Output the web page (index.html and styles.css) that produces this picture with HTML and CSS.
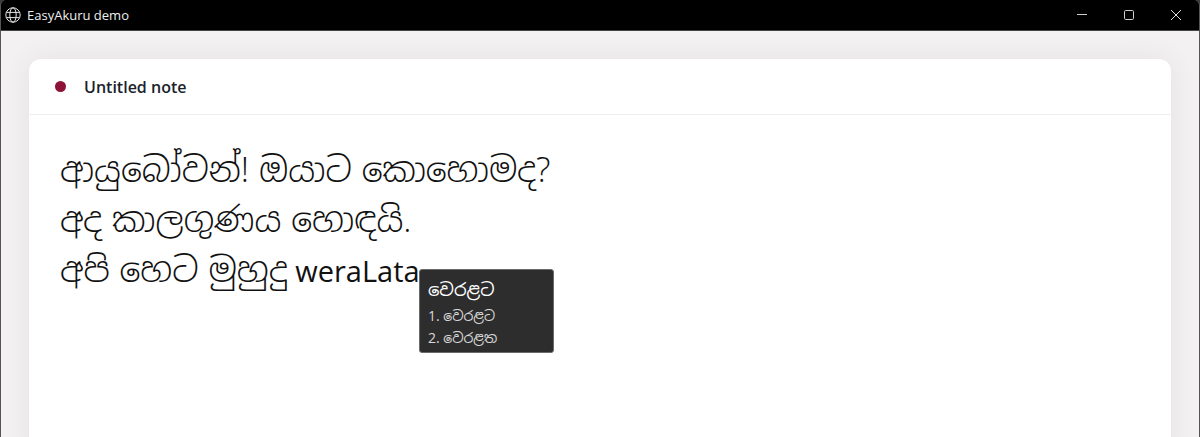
FILE: index.html
```html
<!DOCTYPE html>
<html lang="si">
<head>
<meta charset="utf-8">
<title>EasyAkuru demo</title>
<link rel="stylesheet" href="styles.css">
</head>
<body>
<div class="window">
  <header class="titlebar">
    <div class="app">
      <svg class="globe" viewBox="0 0 16 16" width="16" height="16" fill="none" stroke="#e6e6e6" stroke-width="1">
        <circle cx="8" cy="8" r="7.2"/>
        <ellipse cx="8" cy="8" rx="3.2" ry="7.2"/>
        <path d="M1.4 5.4h13.2M1.4 10.6h13.2"/>
      </svg>
      <span class="app-name">EasyAkuru demo</span>
    </div>
    <div class="controls">
      <svg class="ctl" viewBox="0 0 12 12" width="12" height="12" fill="none" stroke="#cfcfcf"><path d="M1 5.5h10"/></svg>
      <svg class="ctl" viewBox="0 0 12 12" width="12" height="12" fill="none" stroke="#cfcfcf"><rect x="1.5" y="1.5" width="9" height="9" rx="1.2"/></svg>
      <svg class="ctl" viewBox="0 0 12 12" width="12" height="12" fill="none" stroke="#e0e0e0"><path d="M1 1l10 10M11 1L1 11"/></svg>
    </div>
  </header>
  <main class="stage">
    <section class="card">
      <div class="card-head">
        <span class="dot"></span>
        <span class="note-title">Untitled note</span>
      </div>
      <div class="editor">
        <p><span class="si">ආයුබෝවන්! ඔයාට කොහොමද?</span></p>
        <p><span class="si">අද කාලගුණය හොඳයි.</span></p>
        <p><span class="si">අපි හෙට මුහුදු</span> weraLata</p>
      </div>
    </section>
  </main>
  <div class="suggest">
    <div class="suggest-main">වෙරළට</div>
    <div class="suggest-item">1. වෙරළට</div>
    <div class="suggest-item">2. වෙරළත</div>
  </div>
</div>
</body>
</html>
```
FILE: styles.css
```css
* { box-sizing: border-box; }
html, body { margin: 0; height: 100%; overflow: hidden; background: #3a3a3a; }
body { font-family: "Open Sans", "Noto Sans", "Noto Sans Sinhala", sans-serif; }
.window { position: relative; width: 1200px; height: 437px; display: flex; flex-direction: column; border-left: 1px solid #555; border-right: 1px solid #555; border-radius: 6px 6px 0 0; overflow: hidden; }
.titlebar { height: 31px; flex: none; background: #000; color: #eee; display: flex; align-items: center; justify-content: space-between; border-bottom: 1px solid #444; }
.app { display: flex; align-items: center; gap: 6px; padding-left: 4px; }
.app-name { font-size: 13px; line-height: 16px; }
.controls { display: flex; align-items: center; gap: 35px; padding-right: 17px; }
.ctl { display: block; }
.stage { flex: 1; background: #f3f1f2; padding: 28px 28px 0; min-height: 0; }
.card { height: 100%; min-height: 400px; background: #fff; border-radius: 12px 12px 0 0; box-shadow: 0 0 30px rgba(0,0,0,.07); }
.card-head { height: 56px; display: flex; align-items: center; gap: 18px; padding-left: 26px; border-bottom: 1px solid #eeeeee; }
.dot { width: 11px; height: 11px; border-radius: 50%; background: #8f1239; }
.note-title { font-size: 16px; font-weight: 600; color: #1a1f2b; }
.editor { padding: 29px 31px; font-size: 29px; line-height: 50px; color: #111; }
.editor p { margin: 0; height: 50px; }
.si { font-size: 34.3px; font-weight: 350; word-spacing: 1px; }
.suggest { position: absolute; left: 418px; top: 269px; width: 135px; height: 84px; padding: 6px 8px; background: #2d2d2d; border: 1px solid #6b6b6b; border-radius: 3px; color: #fff; }
.suggest-main { font-size: 18px; line-height: 26px; margin-bottom: 3px; }
.suggest-item { font-size: 14px; line-height: 22px; color: #d8d8d8; }
```
